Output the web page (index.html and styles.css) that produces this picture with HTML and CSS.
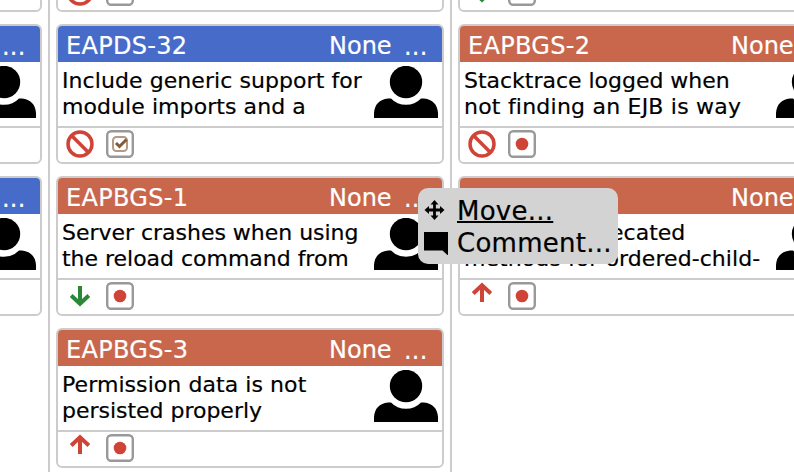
FILE: index.html
```html
<!DOCTYPE html>
<html lang="en">
<head>
<meta charset="utf-8">
<title>Board</title>
<link rel="stylesheet" href="styles.css">
</head>
<body>
<svg class="defs" width="0" height="0" aria-hidden="true">
  <symbol id="person" viewBox="0 0 64 52"><circle cx="32" cy="16" r="16.2"/><path d="M0 52V47Q1 34 14 32.5H17Q23 38.8 32 38.8T47 32.5H50Q63 34 64 47V52Z"/></symbol>
  <symbol id="blocked" viewBox="0 0 28 28"><g fill="none" stroke="#d04437" stroke-width="3.5"><circle cx="14" cy="14" r="12"/><path d="M5.5 5.5L22.5 22.5"/></g></symbol>
  <symbol id="up" viewBox="0 0 28 28"><path d="M14 20V3M5.2 11.5L14 3.2L22.8 11.5" fill="none" stroke="#d04437" stroke-width="4"/></symbol>
  <symbol id="down" viewBox="0 0 28 28"><path d="M14 4V21M5.2 13.5L14 21.8L22.8 13.5" fill="none" stroke="#2a8735" stroke-width="4"/></symbol>
  <symbol id="bug" viewBox="0 0 28 28"><rect x="1.2" y="1.2" width="25.6" height="25.6" rx="4" fill="#fff" stroke="#999" stroke-width="2.4"/><circle cx="14" cy="14" r="6.3" fill="#d04437"/></symbol>
  <symbol id="task" viewBox="0 0 28 28"><rect x="1.2" y="1.2" width="25.6" height="25.6" rx="4" fill="#fff" stroke="#999" stroke-width="2.4"/><rect x="7" y="7" width="14" height="14" rx="3.5" fill="none" stroke="#b59980" stroke-width="2"/><path d="M10 13L13.5 16.5L20.5 9.5" fill="none" stroke="#815b3a" stroke-width="3"/></symbol>
</svg>
<main class="board">
  <section class="column">
    <article class="card"></article>
    <article class="card blue">
      <header><span class="key"></span><span class="more">...</span></header>
      <div class="body"><p></p><svg class="avatar"><use href="#person"/></svg></div>
      <footer></footer>
    </article>
    <article class="card blue">
      <header><span class="key"></span><span class="more">...</span></header>
      <div class="body"><p></p><svg class="avatar"><use href="#person"/></svg></div>
      <footer></footer>
    </article>
  </section>
  <section class="column">
    <article class="card">
      <header></header>
      <div class="body"></div>
      <footer><svg><use href="#blocked"/></svg><svg><use href="#task"/></svg></footer>
    </article>
    <article class="card blue">
      <header><span class="key">EAPDS-32</span><span class="who">None</span><span class="more">...</span></header>
      <div class="body"><p>Include generic support for<br>module imports and a</p><svg class="avatar"><use href="#person"/></svg></div>
      <footer><svg><use href="#blocked"/></svg><svg><use href="#task"/></svg></footer>
    </article>
    <article class="card red">
      <header><span class="key">EAPBGS-1</span><span class="who">None</span><span class="more">...</span></header>
      <div class="body"><p><span class="tight">Server crashes when using</span><br><span class="tight">the reload command from</span></p><svg class="avatar"><use href="#person"/></svg></div>
      <footer><svg><use href="#down"/></svg><svg><use href="#bug"/></svg></footer>
    </article>
    <article class="card red">
      <header><span class="key">EAPBGS-3</span><span class="who">None</span><span class="more">...</span></header>
      <div class="body"><p>Permission data is not<br><span class="tight">persisted properly</span></p><svg class="avatar"><use href="#person"/></svg></div>
      <footer><svg><use href="#up"/></svg><svg><use href="#bug"/></svg></footer>
    </article>
  </section>
  <section class="column">
    <article class="card">
      <header></header>
      <div class="body"></div>
      <footer><svg><use href="#down"/></svg><svg><use href="#task"/></svg></footer>
    </article>
    <article class="card red">
      <header><span class="key">EAPBGS-2</span><span class="who">None</span></header>
      <div class="body"><p><span class="tight">Stacktrace logged when</span><br><span class="loose">not finding an EJB is way</span></p><svg class="avatar"><use href="#person"/></svg></div>
      <footer><svg><use href="#blocked"/></svg><svg><use href="#bug"/></svg></footer>
    </article>
    <article class="card red">
      <header><span class="key">EAPBGS-28</span><span class="who">None</span></header>
      <div class="body"><p><span class="tight">Remove deprecated</span><br>methods for ordered-child-</p><svg class="avatar"><use href="#person"/></svg></div>
      <footer><svg><use href="#up"/></svg><svg><use href="#bug"/></svg></footer>
    </article>
  </section>
</main>
<nav class="menu">
  <a class="item active"><svg viewBox="0 0 24 24"><path d="M10.5 3V19M2.5 11H18.5" stroke="#000" stroke-width="2.8"/><path d="M10.5 1L14.5 5.5H6.5ZM10.5 21L14.5 16.5H6.5ZM.5 11L5 7V15ZM20.5 11L16 7V15Z"/></svg><span>Move...</span></a>
  <a class="item"><svg viewBox="0 0 24 24"><path d="M0 1H24V24.5L18.5 19.5H0Z"/></svg><span>Comment...</span></a>
</nav>
</body>
</html>
```
FILE: styles.css
```css
* { box-sizing: border-box; }
body {
  margin: 0;
  width: 794px;
  height: 472px;
  overflow: hidden;
  background: #fff;
  color: #000;
  font-family: Verdana, "DejaVu Sans", sans-serif;
  font-variant-ligatures: none;
  -webkit-text-stroke: 0.2px;
}
.defs { display: block; }
.board {
  display: flex;
  width: 1206px;
  height: 600px;
  margin: -128px 0 0 -354px;
}
.column {
  display: flex;
  flex-direction: column;
  gap: 12px;
  width: 402px;
  padding: 0 6px;
  border-left: 2px solid #ccc;
}
.card {
  flex: none;
  height: 140px;
  border: 2px solid #ccc;
  border-radius: 6px;
  overflow: hidden;
  background: #fff;
}
.card header {
  display: flex;
  height: 36px;
  padding: 0 14px 0 8px;
  color: #fff;
  font-size: 24px;
  line-height: 40px;
  white-space: nowrap;
}
.blue header { background: #466bc8; }
.red header { background: #c8674b; }
.key { width: 263px; letter-spacing: 0.3px; }
.who { width: 75px; }
.more { line-height: 42px; letter-spacing: 0.2px; }
.key:empty { width: 338px; }
.body {
  display: flex;
  justify-content: space-between;
  height: 64px;
  padding: 4px 4px 0;
}
.body p {
  margin: 2px 0 0;
  font-size: 22px;
  line-height: 26px;
  letter-spacing: 0.07px;
  white-space: nowrap;
}
.tight { letter-spacing: -0.02px; }
.loose { letter-spacing: 0.22px; }
.avatar { flex: none; width: 64px; height: 52px; }
.card footer {
  display: flex;
  gap: 12px;
  height: 36px;
  padding: 2px 8px;
  border-top: 2px solid #ccc;
}
.card footer svg { width: 28px; height: 28px; }
.menu {
  position: absolute;
  left: 418px;
  top: 188px;
  width: 200px;
  height: 76px;
  padding: 7px 6px 5px;
  border-radius: 10px;
  background: #d3d3d3;
}
.item {
  display: flex;
  align-items: center;
  gap: 9px;
  height: 32px;
  font-size: 26px;
  line-height: 32px;
  letter-spacing: 0.25px;
  white-space: nowrap;
}
.item svg { flex: none; width: 24px; height: 24px; }
.active span { text-decoration: underline; text-decoration-thickness: 2px; }
```
